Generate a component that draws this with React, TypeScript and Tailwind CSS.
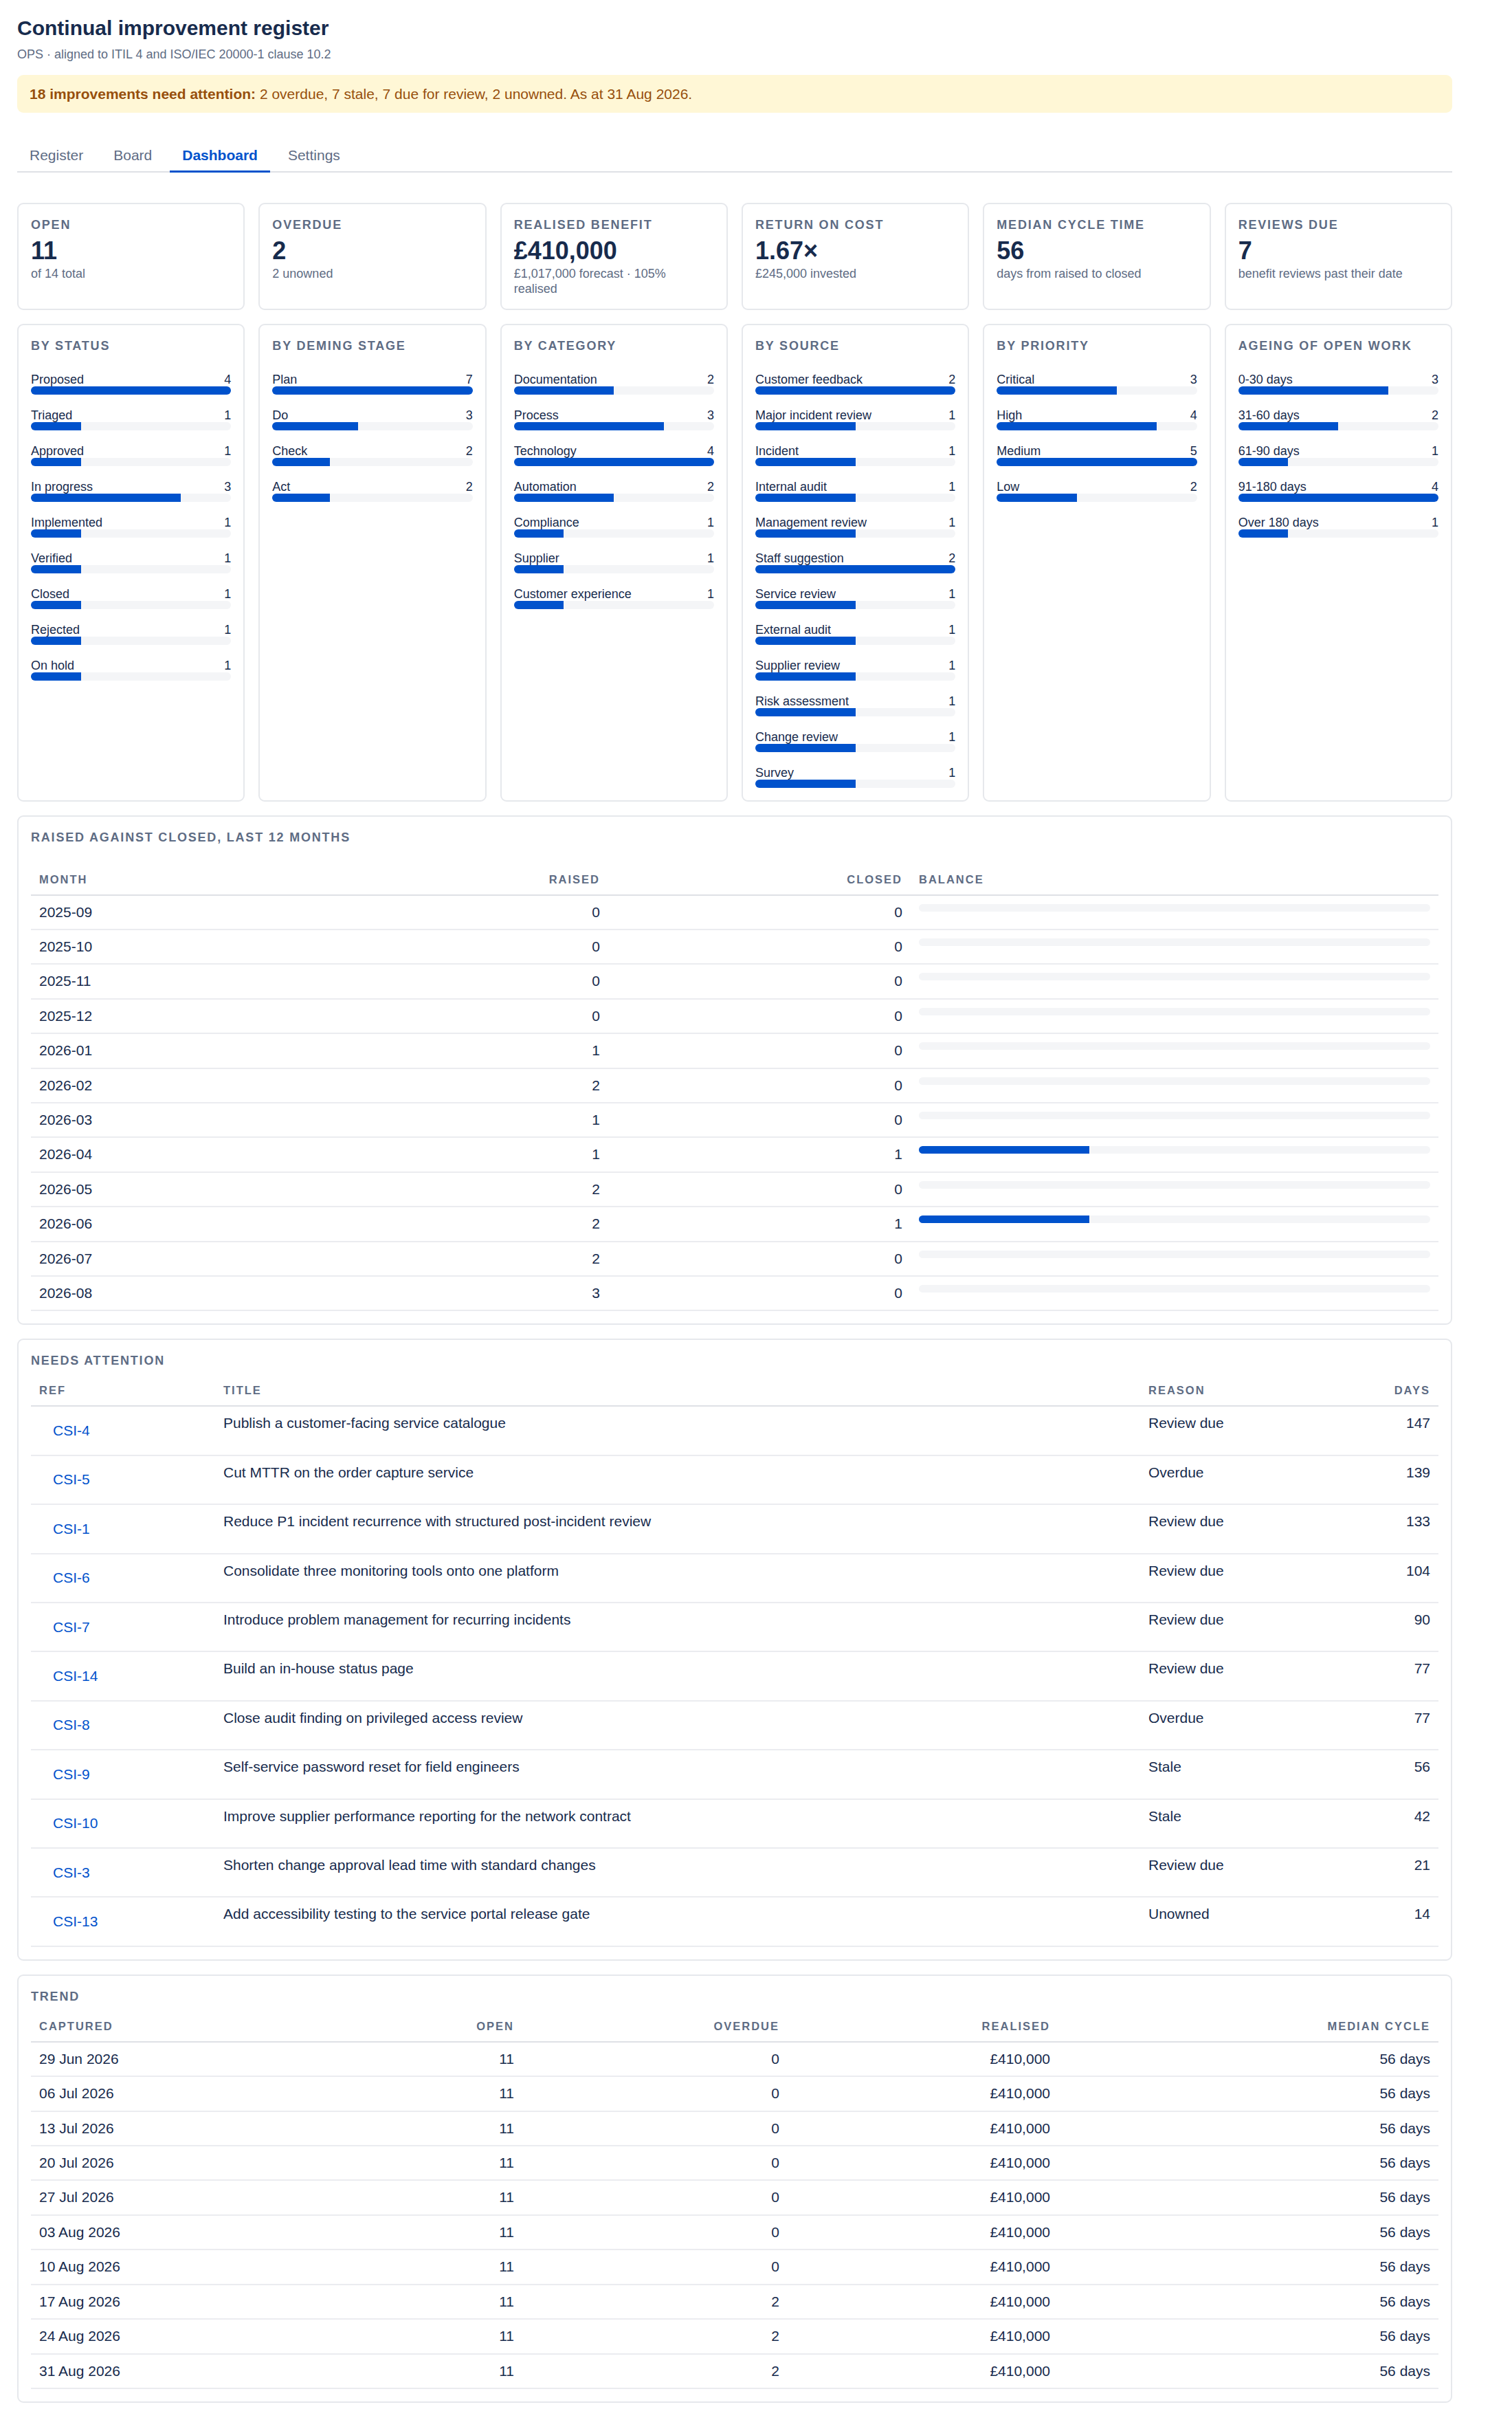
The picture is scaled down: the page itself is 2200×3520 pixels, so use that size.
import React from 'react';

const ink = 'text-[#172b4d]';

type Row = { label: string; n: number };

const breakdowns: { title: string; rows: Row[] }[] = [
  {
    title: 'By status',
    rows: [
      { label: 'Proposed', n: 4 },
      { label: 'Triaged', n: 1 },
      { label: 'Approved', n: 1 },
      { label: 'In progress', n: 3 },
      { label: 'Implemented', n: 1 },
      { label: 'Verified', n: 1 },
      { label: 'Closed', n: 1 },
      { label: 'Rejected', n: 1 },
      { label: 'On hold', n: 1 },
    ],
  },
  {
    title: 'By Deming stage',
    rows: [
      { label: 'Plan', n: 7 },
      { label: 'Do', n: 3 },
      { label: 'Check', n: 2 },
      { label: 'Act', n: 2 },
    ],
  },
  {
    title: 'By category',
    rows: [
      { label: 'Documentation', n: 2 },
      { label: 'Process', n: 3 },
      { label: 'Technology', n: 4 },
      { label: 'Automation', n: 2 },
      { label: 'Compliance', n: 1 },
      { label: 'Supplier', n: 1 },
      { label: 'Customer experience', n: 1 },
    ],
  },
  {
    title: 'By source',
    rows: [
      { label: 'Customer feedback', n: 2 },
      { label: 'Major incident review', n: 1 },
      { label: 'Incident', n: 1 },
      { label: 'Internal audit', n: 1 },
      { label: 'Management review', n: 1 },
      { label: 'Staff suggestion', n: 2 },
      { label: 'Service review', n: 1 },
      { label: 'External audit', n: 1 },
      { label: 'Supplier review', n: 1 },
      { label: 'Risk assessment', n: 1 },
      { label: 'Change review', n: 1 },
      { label: 'Survey', n: 1 },
    ],
  },
  {
    title: 'By priority',
    rows: [
      { label: 'Critical', n: 3 },
      { label: 'High', n: 4 },
      { label: 'Medium', n: 5 },
      { label: 'Low', n: 2 },
    ],
  },
  {
    title: 'Ageing of open work',
    rows: [
      { label: '0-30 days', n: 3 },
      { label: '31-60 days', n: 2 },
      { label: '61-90 days', n: 1 },
      { label: '91-180 days', n: 4 },
      { label: 'Over 180 days', n: 1 },
    ],
  },
];

const months = [
  ['2025-09', 0, 0],
  ['2025-10', 0, 0],
  ['2025-11', 0, 0],
  ['2025-12', 0, 0],
  ['2026-01', 1, 0],
  ['2026-02', 2, 0],
  ['2026-03', 1, 0],
  ['2026-04', 1, 1],
  ['2026-05', 2, 0],
  ['2026-06', 2, 1],
  ['2026-07', 2, 0],
  ['2026-08', 3, 0],
] as const;

const attention = [
  ['CSI-4', 'Publish a customer-facing service catalogue', 'Review due', 147],
  ['CSI-5', 'Cut MTTR on the order capture service', 'Overdue', 139],
  ['CSI-1', 'Reduce P1 incident recurrence with structured post-incident review', 'Review due', 133],
  ['CSI-6', 'Consolidate three monitoring tools onto one platform', 'Review due', 104],
  ['CSI-7', 'Introduce problem management for recurring incidents', 'Review due', 90],
  ['CSI-14', 'Build an in-house status page', 'Review due', 77],
  ['CSI-8', 'Close audit finding on privileged access review', 'Overdue', 77],
  ['CSI-9', 'Self-service password reset for field engineers', 'Stale', 56],
  ['CSI-10', 'Improve supplier performance reporting for the network contract', 'Stale', 42],
  ['CSI-3', 'Shorten change approval lead time with standard changes', 'Review due', 21],
  ['CSI-13', 'Add accessibility testing to the service portal release gate', 'Unowned', 14],
] as const;

const trend = [
  ['29 Jun 2026', 0],
  ['06 Jul 2026', 0],
  ['13 Jul 2026', 0],
  ['20 Jul 2026', 0],
  ['27 Jul 2026', 0],
  ['03 Aug 2026', 0],
  ['10 Aug 2026', 0],
  ['17 Aug 2026', 2],
  ['24 Aug 2026', 2],
  ['31 Aug 2026', 2],
] as const;

function Card({ children, className = '' }: { children: React.ReactNode; className?: string }) {
  return (
    <div className={`rounded-[9px] border-2 border-[#e6e8ec] bg-white p-[18px] ${className}`}>
      {children}
    </div>
  );
}

function Heading({ children, className = '' }: { children: React.ReactNode; className?: string }) {
  return (
    <h3 className={`text-[18px] font-bold uppercase leading-[24px] tracking-[0.1em] text-[#5e6c84] ${className}`}>
      {children}
    </h3>
  );
}

const th = 'px-[12px] py-[12px] text-[16.5px] font-bold uppercase leading-[20px] tracking-[2px] text-[#5e6c84] border-b-2 border-[#dfe1e6]';
const td = `px-[12px] py-[12px] text-[21px] leading-[24.4px] ${ink} border-b-2 border-[#ebecf0]`;

function Stat({ label, value, sub }: { label: string; value: string; sub: React.ReactNode }) {
  return (
    <Card>
      <Heading>{label}</Heading>
      <div className={`mt-[6px] text-[36px] font-bold leading-[40px] ${ink}`}>{value}</div>
      <div className="mt-[2px] text-[18px] leading-[22px] text-[#5e6c84]">{sub}</div>
    </Card>
  );
}

function Breakdown({ title, rows }: { title: string; rows: Row[] }) {
  const max = Math.max(...rows.map((r) => r.n));
  return (
    <Card>
      <Heading className="mb-[27px]">{title}</Heading>
      <div className="flex flex-col gap-[20px]">
        {rows.map((r) => (
          <div key={r.label}>
            <div className={`flex justify-between text-[18px] leading-[20px] ${ink}`}>
              <span>{r.label}</span>
              <span>{r.n}</span>
            </div>
            <div className="h-[12px] overflow-hidden rounded-full bg-[#f4f5f7]">
              <div className="h-full bg-[#0052cc]" style={{ width: `${(r.n / max) * 100}%` }} />
            </div>
          </div>
        ))}
      </div>
    </Card>
  );
}

export default function App() {
  const tabs = ['Register', 'Board', 'Dashboard', 'Settings'];

  return (
    <div className="min-h-screen bg-white px-[25px] pb-[26px] pt-[23px]" style={{ fontFamily: '"Liberation Sans", Arial, sans-serif' }}>
      <div className="w-[2088px]">
        {/* Header */}
        <h1 className={`text-[30px] font-bold leading-[36px] ${ink}`}>Continual improvement register</h1>
        <p className="mt-[8px] text-[18px] leading-[24px] text-[#5e6c84]">OPS · aligned to ITIL 4 and ISO/IEC 20000-1 clause 10.2</p>

        <div className="mt-[17.5px] rounded-[9px] bg-[#fff7d6] px-[18px] py-[15px] text-[21px] leading-[25px] text-[#974f0c]">
          <span className="font-bold">18 improvements need attention:</span> 2 overdue, 7 stale, 7 due for review, 2 unowned. As at 31 Aug 2026.
        </div>

        {/* Tabs */}
        <div className="mt-[38px] flex gap-[8px] border-b-2 border-[#dfe1e6] text-[21px] leading-[25px]">
          {tabs.map((t) =>
            t === 'Dashboard' ? (
              <div key={t} className="-mb-[2px] border-b-[3px] border-[#0052cc] px-[18px] pb-[10px] pt-[11px] font-bold text-[#0052cc]">
                {t}
              </div>
            ) : (
              <div key={t} className="px-[18px] py-[11px] text-[#5e6c84]">
                {t}
              </div>
            )
          )}
        </div>

        {/* Stats */}
        <div className="mt-[44px] grid grid-cols-6 gap-[20px]">
          <Stat label="Open" value="11" sub="of 14 total" />
          <Stat label="Overdue" value="2" sub="2 unowned" />
          <Stat
            label="Realised benefit"
            value="£410,000"
            sub={
              <>
                £1,017,000 forecast · 105%
                <br />
                realised
              </>
            }
          />
          <Stat label="Return on cost" value="1.67×" sub="£245,000 invested" />
          <Stat label="Median cycle time" value="56" sub="days from raised to closed" />
          <Stat label="Reviews due" value="7" sub="benefit reviews past their date" />
        </div>

        {/* Breakdowns */}
        <div className="mt-[20px] grid grid-cols-6 gap-[20px]">
          {breakdowns.map((b) => (
            <Breakdown key={b.title} title={b.title} rows={b.rows} />
          ))}
        </div>

        {/* Raised against closed */}
        <Card className="mt-[20px]">
          <Heading className="mb-[27px]">Raised against closed, last 12 months</Heading>
          <div className="grid grid-cols-[420px_420px_440px_1fr]">
            <div className={th}>Month</div>
            <div className={`${th} text-right`}>Raised</div>
            <div className={`${th} text-right`}>Closed</div>
            <div className={th}>Balance</div>
            {months.map(([m, raised, closed]) => (
              <React.Fragment key={m}>
                <div className={td}>{m}</div>
                <div className={`${td} text-right`}>{raised}</div>
                <div className={`${td} text-right`}>{closed}</div>
                <div className={td}>
                  <div className="h-[11px] overflow-hidden rounded-full bg-[#f4f5f7]">
                    <div className="h-full bg-[#0052cc]" style={{ width: `${(closed / 3) * 100}%` }} />
                  </div>
                </div>
              </React.Fragment>
            ))}
          </div>
        </Card>

        {/* Needs attention */}
        <Card className="mt-[20px]">
          <Heading className="mb-[9px]">Needs attention</Heading>
          <div className="grid grid-cols-[268px_1fr_290px_144px]">
            <div className={th}>Ref</div>
            <div className={th}>Title</div>
            <div className={th}>Reason</div>
            <div className={`${th} text-right`}>Days</div>
            {attention.map(([ref, title, reason, days]) => (
              <React.Fragment key={ref}>
                <div className={td}>
                  <a href="#" className="block py-[10.5px] pl-[20px] text-[#0052cc]">
                    {ref}
                  </a>
                </div>
                <div className={td}>{title}</div>
                <div className={td}>{reason}</div>
                <div className={`${td} text-right`}>{days}</div>
              </React.Fragment>
            ))}
          </div>
        </Card>

        {/* Trend */}
        <Card className="mt-[20px]">
          <Heading className="mb-[9px]">Trend</Heading>
          <div className="grid grid-cols-[335px_380px_386px_394px_1fr]">
            <div className={th}>Captured</div>
            <div className={`${th} text-right`}>Open</div>
            <div className={`${th} text-right`}>Overdue</div>
            <div className={`${th} text-right`}>Realised</div>
            <div className={`${th} text-right`}>Median cycle</div>
            {trend.map(([date, overdue]) => (
              <React.Fragment key={date}>
                <div className={td}>{date}</div>
                <div className={`${td} text-right`}>11</div>
                <div className={`${td} text-right`}>{overdue}</div>
                <div className={`${td} text-right`}>£410,000</div>
                <div className={`${td} text-right`}>56 days</div>
              </React.Fragment>
            ))}
          </div>
        </Card>
      </div>
    </div>
  );
}
